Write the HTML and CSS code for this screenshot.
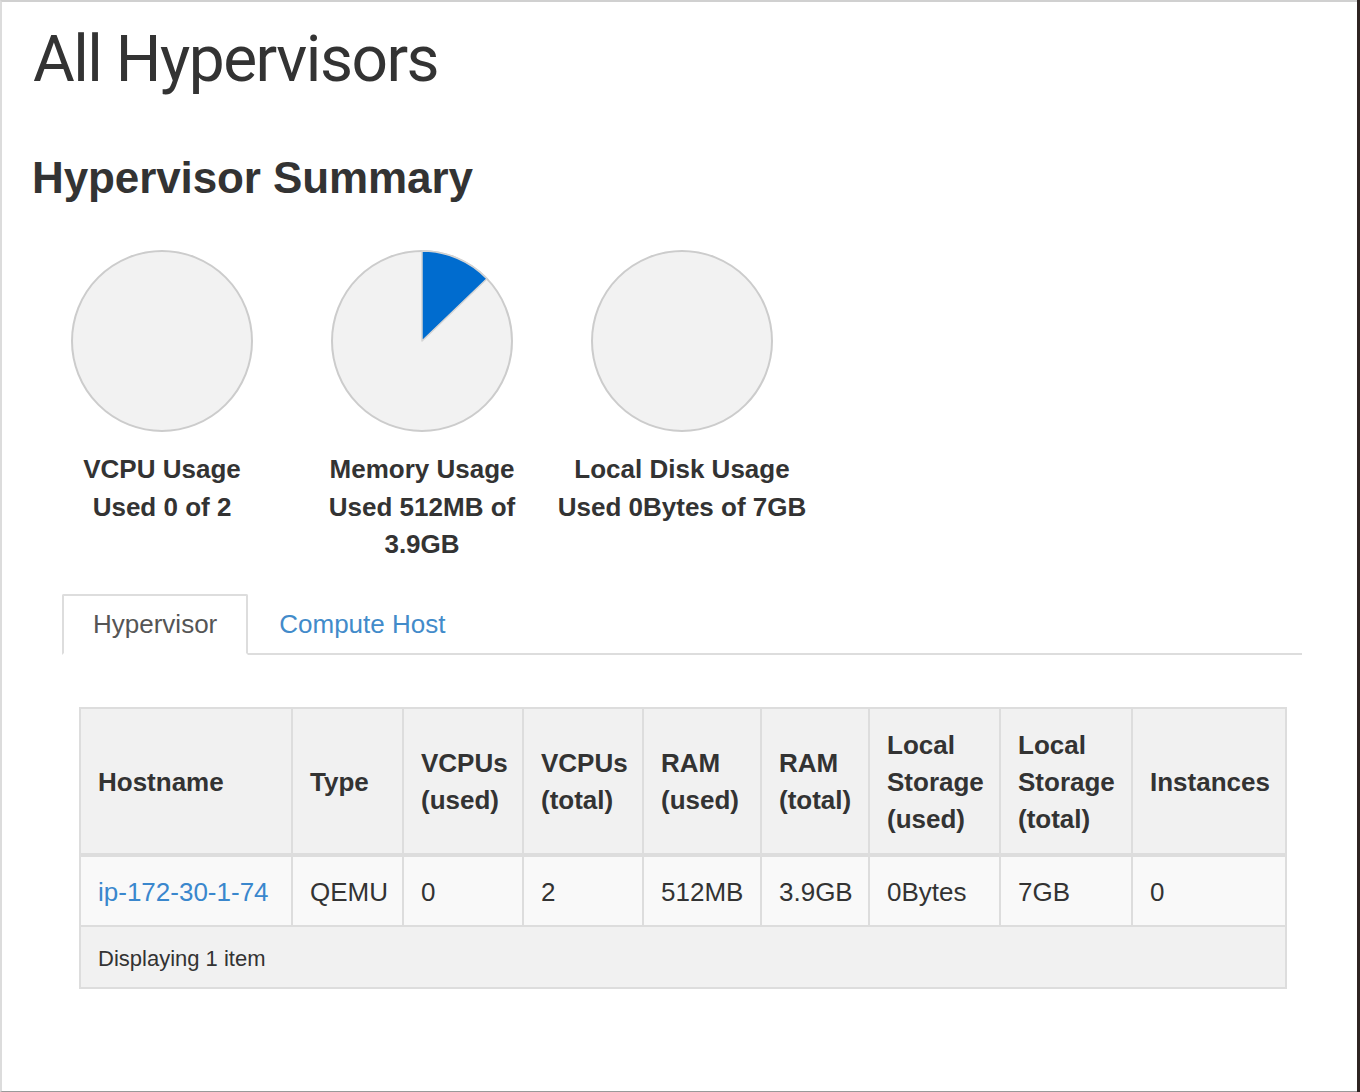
FILE: index.html
```html
<!DOCTYPE html>
<html>
<head>
<meta charset="utf-8">
<link rel="stylesheet" href="styles.css">
</head>
<body>
<div class="window">
  <h1 class="page-title">All Hypervisors</h1>
  <h3 class="section-title">Hypervisor Summary</h3>
  <div class="charts">
    <div class="chart">
      <svg class="pie" width="184" height="184" viewBox="0 0 184 184">
        <circle cx="92" cy="92" r="90" fill="#f2f2f2" stroke="#cccccc" stroke-width="2"/>
      </svg>
      <div class="chart-label">VCPU Usage<br>Used 0 of 2</div>
    </div>
    <div class="chart">
      <svg class="pie" width="184" height="184" viewBox="0 0 184 184">
        <circle cx="92" cy="92" r="90" fill="#f2f2f2" stroke="#cccccc" stroke-width="2"/>
        <path d="M92 92 L92 2 A90 90 0 0 1 156.9 29.7 Z" fill="#006ccf" stroke="#d4d4d4" stroke-width="1.5" stroke-linejoin="round"/>
      </svg>
      <div class="chart-label">Memory Usage<br>Used 512MB of 3.9GB</div>
    </div>
    <div class="chart">
      <svg class="pie" width="184" height="184" viewBox="0 0 184 184">
        <circle cx="92" cy="92" r="90" fill="#f2f2f2" stroke="#cccccc" stroke-width="2"/>
      </svg>
      <div class="chart-label">Local Disk Usage<br>Used 0Bytes of 7GB</div>
    </div>
  </div>

  <ul class="tabs">
    <li class="tab active">Hypervisor</li>
    <li class="tab"><a href="#">Compute Host</a></li>
  </ul>

  <table class="data">
    <colgroup>
      <col style="width:212px"><col style="width:111px"><col style="width:120px"><col style="width:120px"><col style="width:118px"><col style="width:108px"><col style="width:131px"><col style="width:132px"><col style="width:154px">
    </colgroup>
    <thead>
      <tr>
        <th>Hostname</th>
        <th>Type</th>
        <th>VCPUs (used)</th>
        <th>VCPUs (total)</th>
        <th>RAM (used)</th>
        <th>RAM (total)</th>
        <th>Local Storage (used)</th>
        <th>Local Storage (total)</th>
        <th>Instances</th>
      </tr>
    </thead>
    <tbody>
      <tr>
        <td><a href="#">ip-172-30-1-74</a></td>
        <td>QEMU</td>
        <td>0</td>
        <td>2</td>
        <td>512MB</td>
        <td>3.9GB</td>
        <td>0Bytes</td>
        <td>7GB</td>
        <td>0</td>
      </tr>
    </tbody>
    <tfoot>
      <tr>
        <td colspan="9">Displaying 1 item</td>
      </tr>
    </tfoot>
  </table>
</div>
</body>
</html>
```

FILE: styles.css
```css
html, body {
  margin: 0;
  padding: 0;
}
body {
  background: #2e2422;
  width: 1360px;
  height: 1092px;
  overflow: hidden;
  font-family: "Liberation Sans", Arial, sans-serif;
  color: #333333;
}
.window {
  box-sizing: border-box;
  width: 1357px;
  height: 1092px;
  background: #ffffff;
  border-top: 2px solid #d0d0d0;
  border-left: 2px solid #dcdcdc;
  border-bottom: 1px solid #9a9a9a;
  padding: 23px 0 0 30px;
}
.page-title {
  margin: 0;
  font-family: Roboto, "Open Sans", sans-serif;
  font-weight: 400;
  font-size: 64px;
  line-height: 70px;
  letter-spacing: -1.5px;
  color: #333333;
  padding-left: 1px;
}
.section-title {
  margin: 59px 0 0 0;
  font-family: "Liberation Sans", Arial, sans-serif;
  font-weight: 700;
  font-size: 44px;
  line-height: 48px;
  color: #333333;
  letter-spacing: -0.1px;
}
.charts {
  display: flex;
  margin-top: 47px;
}
.chart {
  width: 260px;
  display: flex;
  flex-direction: column;
  align-items: center;
}
.pie {
  display: block;
}
.chart-label {
  margin-top: 18px;
  text-align: center;
  font-weight: 700;
  font-size: 26px;
  line-height: 37.5px;
  color: #333333;
}
.tabs {
  list-style: none;
  display: flex;
  margin: 30px 30px 0 30px;
  padding: 0;
  border-bottom: 2px solid #dddddd;
  width: 1240px;
}
.tab {
  font-size: 26px;
  line-height: 37px;
  padding: 10px 29px;
  border: 2px solid transparent;
  margin-bottom: -2px;
  color: #555555;
}
.tab.active {
  border-color: #dddddd;
  border-bottom-color: #ffffff;
  background: #ffffff;
  border-radius: 2px 2px 0 0;
}
.tab a {
  color: #428bca;
  text-decoration: none;
}
.data {
  margin: 52px 0 0 47px;
  width: 1206px;
  table-layout: fixed;
  border-collapse: collapse;
  border: 2px solid #dddddd;
  font-size: 26px;
}
.data th, .data td {
  border: 2px solid #dddddd;
  text-align: left;
  vertical-align: middle;
  padding: 15px 13px 15px 17px;
  line-height: 37px;
}
.data thead th {
  background: #f1f1f1;
  font-weight: 700;
  padding: 18px 13px 15px 17px;
  border-bottom: 4px solid #dddddd;
  color: #333333;
}
.data tbody td {
  background: #f9f9f9;
  padding: 17px 13px 14px 17px;
  color: #333333;
}
.data tbody a {
  color: #3a87cd;
  text-decoration: none;
}
.data tfoot td {
  background: #f1f1f1;
  font-size: 22px;
  line-height: 31px;
  padding: 16px 13px 13px 17px;
  color: #333333;
}
```
